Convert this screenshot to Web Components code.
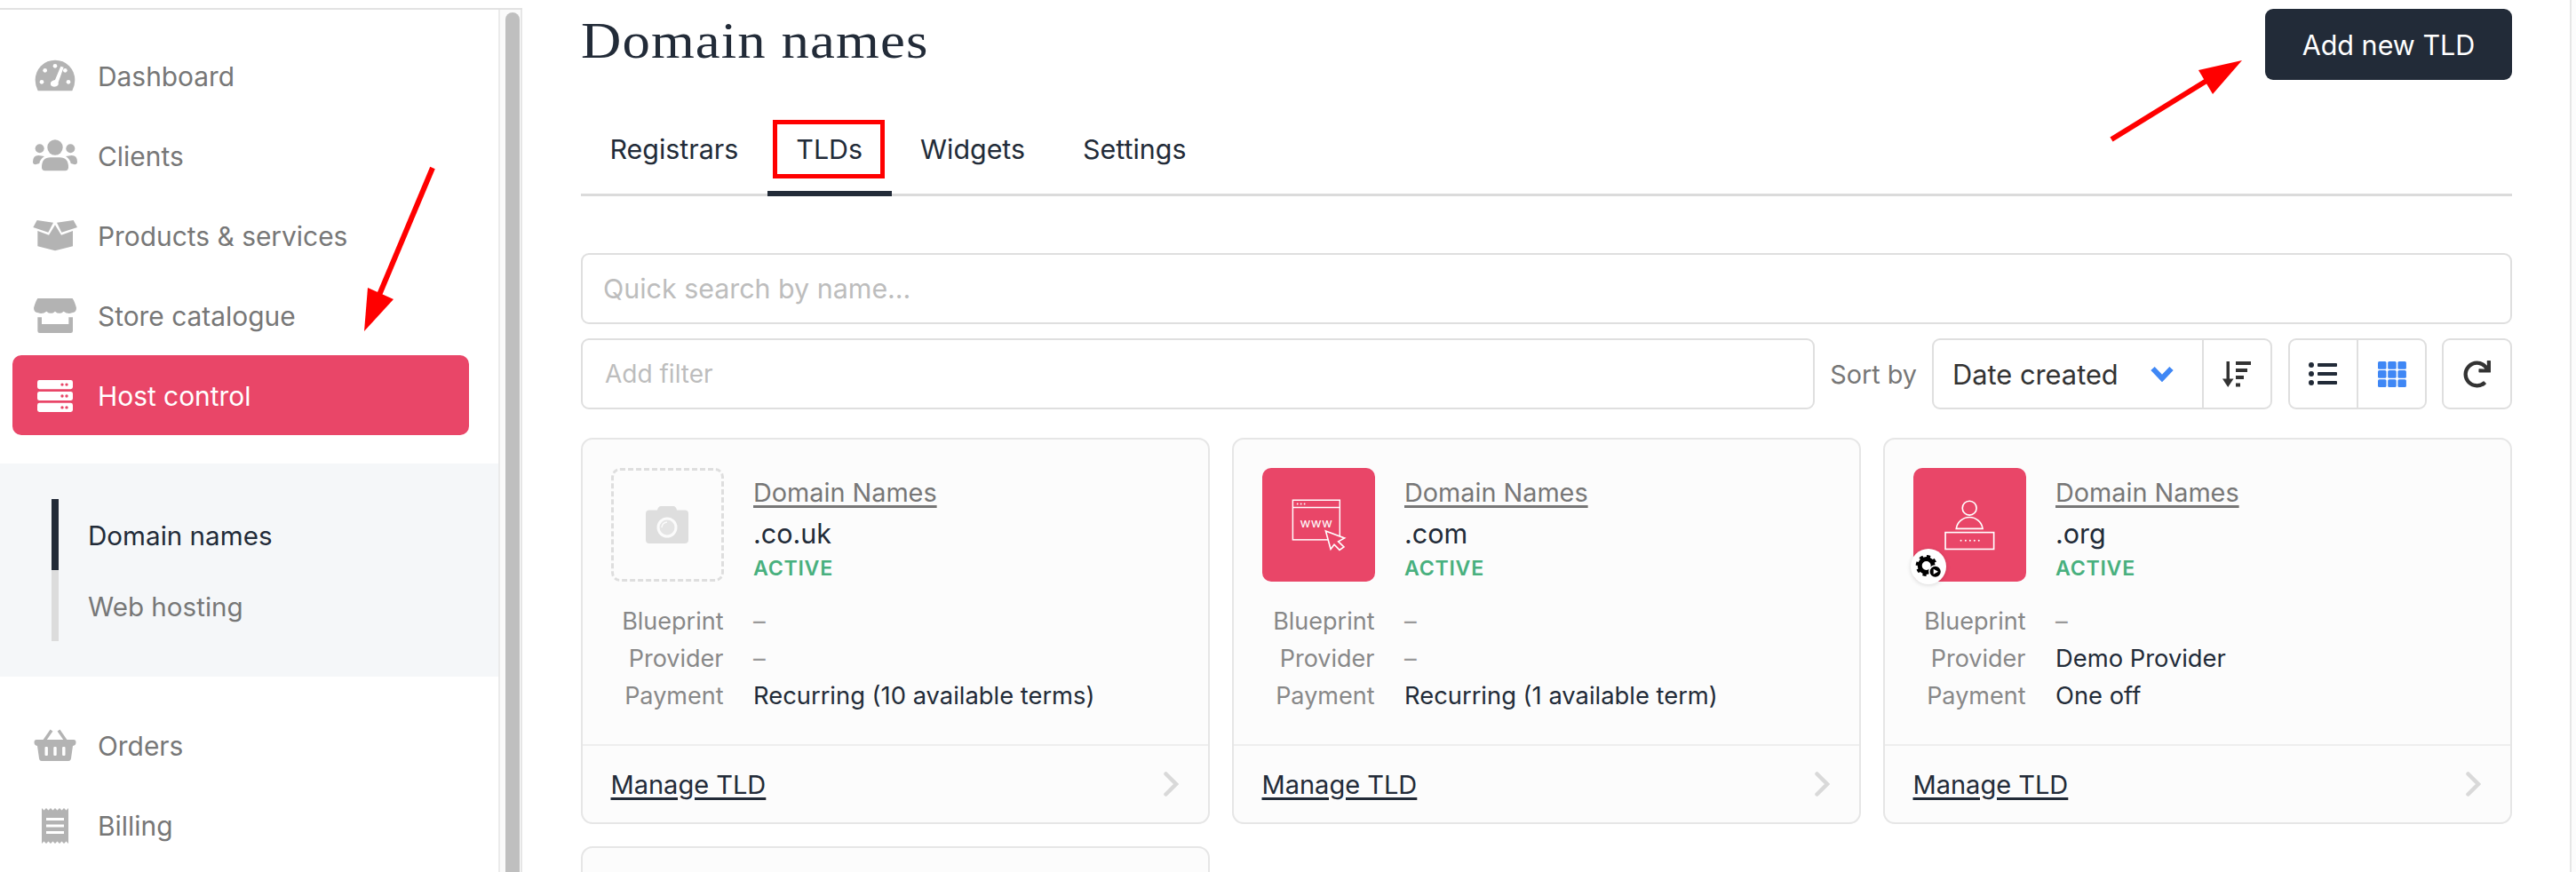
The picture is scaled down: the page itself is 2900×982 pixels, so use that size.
<!DOCTYPE html>
<html lang="en">
<head>
<meta charset="utf-8">
<title>Domain names</title>
<style>
html,body{margin:0;padding:0;background:#fff;overflow:hidden}
body{font-family:Inter,"Liberation Sans",sans-serif;color:#222b38;font-size:29.6px}
</style>
</head>
<body>
<app-shell>
  <side-bar slot="side">
    <nav-item><svg slot="icon" width="50" height="40" viewBox="111 78 150 120"><path fill="#b3b3b3" d="M128 187Q119 170 119 150A67 67 0 0 1 253 150Q253 170 244 187Z"/><g fill="#fff"><circle cx="141" cy="157" r="7"/><circle cx="152" cy="118" r="7"/><circle cx="186" cy="103" r="7"/><circle cx="220" cy="118" r="7"/><circle cx="231" cy="157" r="7"/><path d="M205 104L215 107L197 158Q200 172 183 173Q169 173 171 160Q174 152 186 150Z"/></g></svg>Dashboard</nav-item>
    <nav-item><svg slot="icon" width="50" height="40" viewBox="111 348 150 120"><g fill="#b3b3b3"><circle cx="186" cy="378" r="26"/><circle cx="134" cy="382" r="15"/><circle cx="238" cy="382" r="15"/><path d="M141 445Q141 412 170 412L202 412Q231 412 231 445Q231 457 220 457L152 457Q141 457 141 445Z"/><path d="M111 427Q111 405 130 405L150 408Q135 418 133 432L120 436Q111 436 111 427Z"/><path d="M261 427Q261 405 242 405L222 408Q237 418 239 432L252 436Q261 436 261 427Z"/></g></svg>Clients</nav-item>
    <nav-item><svg slot="icon" width="50" height="40" viewBox="111 618 150 120"><g fill="#b3b3b3"><path d="M125 624L180 632L163 665L112 648Z"/><path d="M248 624L192 632L208 665L261 648Z"/><path d="M127 660L165 674L186 640L207 674L246 660L246 712L186 727L127 712Z"/></g></svg>Products &amp; services</nav-item>
    <nav-item><svg slot="icon" width="50" height="40" viewBox="111 888 150 120"><g fill="#b3b3b3"><path d="M130 885L242 885Q250 892 258 920Q258 935 243 937Q228 942 215 932Q200 945 186 932Q172 945 157 932Q144 942 129 937Q114 935 114 920Q122 892 130 885Z"/><path d="M127 952L141 952L141 975L232 975L232 952L246 952L246 998Q246 1005 239 1005L134 1005Q127 1005 127 998Z"/></g></svg>Store catalogue</nav-item>
    <nav-item active><svg slot="icon" width="40" height="36" viewBox="0 0 40 36"><g fill="#fff"><rect width="40" height="10.2" rx="2.4"/><rect y="12.9" width="40" height="10.2" rx="2.4"/><rect y="25.8" width="40" height="10.2" rx="2.4"/></g><g fill="#e94668"><circle cx="28" cy="5.1" r="1.7"/><circle cx="33" cy="5.1" r="1.7"/><circle cx="28" cy="18" r="1.7"/><circle cx="33" cy="18" r="1.7"/><circle cx="28" cy="30.9" r="1.7"/><circle cx="33" cy="30.9" r="1.7"/></g></svg>Host control</nav-item>
    <sub-nav>
      <sub-item active>Domain names</sub-item>
      <sub-item>Web hosting</sub-item>
    </sub-nav>
    <nav-item><svg slot="icon" width="50" height="40" viewBox="0 0 50 40"><g fill="none" stroke="#b3b3b3" stroke-width="3.4"><path d="M13 14L21 2.5"/><path d="M37 14L29 2.5"/></g><path fill="#b3b3b3" d="M4 13H46Q48.500 13 48.500 16Q48.500 19.500 45 20L43 34Q42.600 37 40 37H10Q7.400 37 7 34L5 20Q1.500 19.500 1.500 16Q1.500 13 4 13Z"/><g fill="#fff"><rect x="13.500" y="21" width="3.400" height="10" rx="1"/><rect x="23.300" y="21" width="3.400" height="10" rx="1"/><rect x="33.100" y="21" width="3.400" height="10" rx="1"/></g></svg>Orders</nav-item>
    <nav-item><svg slot="icon" width="50" height="40" viewBox="0 0 50 40"><path fill="#b3b3b3" d="M10 0L12.500 2.500L15 0L17.500 2.500L20 0L22.500 2.500L25 0L27.500 2.500L30 0L32.500 2.500L35 0L37.500 2.500L40 0V40L37.500 37.500L35 40L32.500 37.500L30 40L27.500 37.500L25 40L22.500 37.500L20 40L17.500 37.500L15 40L12.500 37.500L10 40Z"/><g fill="#fff"><rect x="15" y="11" width="20" height="3"/><rect x="15" y="18.500" width="20" height="3"/><rect x="15" y="26" width="20" height="3"/></g></svg>Billing</nav-item>
  </side-bar>
  <main-view slot="main">
    <page-header>Domain names<app-button slot="action">Add new TLD</app-button></page-header>
    <tab-bar>
      <tab-item>Registrars</tab-item>
      <tab-item active marked>TLDs</tab-item>
      <tab-item>Widgets</tab-item>
      <tab-item>Settings</tab-item>
    </tab-bar>
    <search-box>Quick search by name...</search-box>
    <filter-bar></filter-bar>
    <card-grid>
      <tld-card name=".co.uk" blueprint="–" provider="–" payment="Recurring (10 available terms)" dim-blueprint dim-provider>
        <thumb-box slot="thumb" dashed><svg width="48" height="42" viewBox="0 0 48 42"><path fill="#dedede" d="M17 0H31Q34 0 35 4.500H44Q48 4.500 48 8.500V38Q48 42 44 42H4Q0 42 0 38V8.500Q0 4.500 4 4.500H13Q14 0 17 0Z"/><circle cx="24" cy="24" r="11.500" fill="#fbfbfb"/><circle cx="24" cy="24" r="8.500" fill="#e4e4e4"/><path d="M18 24A6 6 0 0 1 24 18" fill="none" stroke="#fbfbfb" stroke-width="1.500"/></svg></thumb-box>
      </tld-card>
      <tld-card name=".com" blueprint="–" provider="–" payment="Recurring (1 available term)" dim-blueprint dim-provider>
        <thumb-box slot="thumb"><svg width="128" height="128" viewBox="63 50 384 384"><g fill="none" stroke="#fff" stroke-width="4.500"><rect x="167" y="158" width="160" height="135"/><path d="M167 183H327"/></g><g fill="#fff"><circle cx="183" cy="171" r="2.800"/><circle cx="195" cy="171" r="2.800"/><circle cx="207" cy="171" r="2.800"/></g><text x="247" y="250" text-anchor="middle" font-family="Inter,'Liberation Sans',sans-serif" font-size="44" letter-spacing="1" fill="#fff">www</text><path fill="#e94668" stroke="#fff" stroke-width="5" stroke-linejoin="miter" d="M279 263L343 287L322 299L341 317L326 328L308 309L296 325Z"/></svg></thumb-box>
      </tld-card>
      <tld-card name=".org" blueprint="–" provider="Demo Provider" payment="One off" dim-blueprint>
        <thumb-box slot="thumb" badge><svg width="128" height="128" viewBox="70 50 384 384"><g fill="none" stroke="#fff" stroke-width="5"><circle cx="261" cy="185" r="24"/><path d="M216 255A45.500 45.500 0 0 1 306 255Z"/><rect x="179" y="268" width="165" height="57"/></g><g fill="#fff"><circle cx="232" cy="296" r="3"/><circle cx="248" cy="296" r="3"/><circle cx="263" cy="296" r="3"/><circle cx="278" cy="296" r="3"/><circle cx="293" cy="296" r="3"/></g></svg></thumb-box>
      </tld-card>
      <tld-card empty></tld-card>
    </card-grid>
  </main-view>
  <mark-arrows slot="over"></mark-arrows>
</app-shell>

<script>
function define(tag, css, html){
  customElements.define(tag, class extends HTMLElement{
    constructor(){
      super();
      const r=this.attachShadow({mode:'open'});
      r.innerHTML='<style>*,:host{box-sizing:border-box}'+css+'</style>'+(typeof html==='function'?html(this):html);
    }
  });
}

define('app-shell',`
  :host{display:flex;position:relative;width:2900px;height:982px;overflow:hidden;background:#fff}
  .left{display:flex;width:588px;flex:none;margin-top:9px;border-top:2px solid #e2e2e2}
  .rail{flex:none;width:27px;border-left:2px solid #ebebeb;border-right:2px solid #e6e6e6;background:#fafafa;padding:3px 2px 0 6px;overflow:hidden}
  .thumb{background:#bfbfbf;border-radius:8px 8px 0 0;width:16px;height:1200px}
  .edge{flex:none;width:7px;border-left:2px solid #e6e6e6;background:#fcfcfc}
  .over{position:absolute;inset:0;pointer-events:none}
`,`<div class="left"><slot name="side"></slot><div class="rail"><div class="thumb"></div></div></div><slot name="main"></slot><div class="edge"></div><div class="over"><slot name="over"></slot></div>`);

define('side-bar',`
  :host{display:block;width:561px;flex:none;padding-top:30px;overflow:hidden;background:#fff}
`,`<slot></slot>`);

define('nav-item',`
  :host{display:flex;align-items:center;height:90px;margin:0 33px 0 14px;padding-left:23px;border-radius:10px;color:#777;font-size:29.9px;line-height:40px}
  :host([active]){background:#e94668;color:#fff;margin-top:-1px;padding-top:2px}
  .ic{display:flex;width:50px;height:40px;margin-right:23px;align-items:center;justify-content:center;flex:none}
`,`<span class="ic"><slot name="icon"></slot></span><span><slot></slot></span>`);

define('sub-nav',`
  :host{display:block;margin:32px 0 33px;padding:40px 58px;background:#f5f7f9}
`,`<slot></slot>`);

define('sub-item',`
  :host{display:flex;align-items:center;height:80px;padding:2px 0 0 33px;border-left:8px solid #dcdcdc;color:#777;font-size:29.6px}
  :host([active]){border-left-color:#222b38;color:#222b38}
`,`<slot></slot>`);

define('main-view',`
  :host{display:block;flex:1;min-width:0;padding:10px 65px 0 66px;overflow:hidden;background:#fff}
`,`<slot></slot>`);

define('page-header',`
  :host{display:flex;justify-content:space-between;align-items:flex-start;height:80px}
  h1{margin:0;font:400 56px/72px "Liberation Serif",serif;color:#222b38;letter-spacing:1px;transform:scaleX(1.12);transform-origin:left center;white-space:nowrap}
`,`<h1><slot></slot></h1><slot name="action"></slot>`);

define('app-button',`
  :host{display:flex;align-items:center;justify-content:center;width:278px;height:80px;background:#222b38;border-radius:9px;color:#fff;font-size:30.5px}
`,`<slot></slot>`);

define('tab-bar',`
  :host{display:flex;height:131px;padding-top:44px;box-shadow:inset 0 -3px 0 #dbdbdb}
`,`<slot></slot>`);

define('tab-item',`
  :host{display:block;position:relative;height:87px;padding:0 32.5px;border-bottom:6px solid transparent;color:#222b38;font-size:30.4px;line-height:68px}
  :host([active]){border-bottom-color:#222b38}
  .mark{display:none;position:absolute;left:6px;top:1px;width:126px;height:66px;border:5px solid #f00}
  :host([marked]) .mark{display:block}
`,`<slot></slot><span class="mark"></span>`);

define('search-box',`
  :host{display:flex;align-items:center;height:80px;margin-top:64px;padding-left:23px;border:2.500px solid #dfdfdf;border-radius:9px;color:#bdbdbd;font-size:30.4px;background:#fff}
`,`<slot></slot>`);

define('filter-bar',`
  :host{display:flex;align-items:center;height:80px;margin:16px 0 32px;font-size:30.8px}
  .box{display:flex;align-items:stretch;height:80px;border:2.500px solid #dfdfdf;border-radius:9px;background:#fff}
  .input{flex:1;align-items:center;padding-left:25px;color:#bdbdbd;font-size:28px}
  .label{margin:0 17px;color:#777;font-size:28.8px}
  .sel{width:383px}
  .seg{display:flex;align-items:center;justify-content:center}
  .seg+.seg{border-left:2px solid #dfdfdf}
  .date{width:302px;padding-left:21px;justify-content:flex-start;color:#333}
  .date svg{margin-left:auto;margin-right:32px}
  .grp{width:156px;margin-left:18px}
  .grp .seg{flex:1}
  .grp .seg:first-child svg{margin-left:-2px}
  .re{width:79px;margin-left:17px;align-items:center;justify-content:center}
`,`<div class="box input">Add filter</div><span class="label">Sort by</span>
  <div class="box sel"><div class="seg date">Date created<svg width="26" height="18" viewBox="0 0 26 18"><path d="M2.500 3L13 14L23.500 3" fill="none" stroke="#3f87f5" stroke-width="6"/></svg></div>
  <div class="seg" style="flex:1"><svg width="32" height="29" viewBox="0 0 32 29" style="margin-left:-2px"><g fill="#333"><rect x="4.500" y="0" width="3.500" height="22"/><path d="M0 19.500H12.500L6.200 29Z"/><rect x="15" y="0" width="17" height="4"/><rect x="15" y="8" width="13" height="4"/><rect x="15" y="16" width="9" height="4"/><rect x="15" y="24.500" width="5" height="4"/></g></svg></div></div>
  <div class="box grp"><div class="seg"><svg width="32" height="28" viewBox="0 0 32 28"><g fill="#222b38"><circle cx="3" cy="4" r="3"/><circle cx="3" cy="14" r="3"/><circle cx="3" cy="24" r="3"/><rect x="10" y="2" width="22" height="4" rx="1"/><rect x="10" y="12" width="22" height="4" rx="1"/><rect x="10" y="22" width="22" height="4" rx="1"/></g></svg></div>
  <div class="seg"><svg width="32" height="29" viewBox="0 0 32 29"><g fill="#3f87f5"><rect width="9.500" height="8.700" rx="1.500"/><rect x="11.200" width="9.500" height="8.700" rx="1.500"/><rect x="22.400" width="9.500" height="8.700" rx="1.500"/><rect y="10.100" width="9.500" height="8.700" rx="1.500"/><rect x="11.200" y="10.100" width="9.500" height="8.700" rx="1.500"/><rect x="22.400" y="10.100" width="9.500" height="8.700" rx="1.500"/><rect y="20.200" width="9.500" height="8.700" rx="1.500"/><rect x="11.200" y="20.200" width="9.500" height="8.700" rx="1.500"/><rect x="22.400" y="20.200" width="9.500" height="8.700" rx="1.500"/></g></svg></div></div>
  <div class="box re"><svg width="31" height="31" viewBox="0 0 512 512"><path fill="#333" d="M500.33 0h-47.41a12 12 0 0 0-12 12.57l4 82.76A247.42 247.42 0 0 0 256 8C119.34 8 8.9 119.53 8 256.19 7.1 393.07 118.08 504 256 504a247.1 247.1 0 0 0 166.18-63.91 12 12 0 0 0 .48-17.43l-34-34a12 12 0 0 0-16.38-.55A176 176 0 1 1 402.1 157.8l-101.53-4.87a12 12 0 0 0-12.57 12v47.41a12 12 0 0 0 12 12h200.33a12 12 0 0 0 12-12V12a12 12 0 0 0-12-12z"/></svg></div>`);

define('card-grid',`
  :host{display:grid;grid-template-columns:repeat(3,708px);grid-auto-rows:435px;gap:25px}
`,`<slot></slot>`);

define('thumb-box',`
  :host{display:flex;position:relative;align-items:center;justify-content:center;width:127px;height:128px;border-radius:10px;background:#e94668;flex:none}
  :host([dashed]){background:none;border:3px dashed #dedede}
  .b{display:none;position:absolute;left:-3px;top:91px;width:40px;height:40px;border-radius:50%;background:#fff;box-shadow:0 1px 5px rgba(0,0,0,.14)}
  :host([badge]) .b{display:block}
  .b svg{display:block}
`,`<slot></slot><span class="b"><svg width="40" height="40" viewBox="0 0 40 40"><circle cx="17.700" cy="19" r="7.500" fill="none" stroke="#000" stroke-width="5"/><circle cx="17.700" cy="19" r="10.500" fill="none" stroke="#000" stroke-width="3" stroke-dasharray="4.120 4.120"/><circle cx="27.700" cy="25.700" r="6.800" fill="#000" stroke="#fff" stroke-width="1.500"/><path d="M25.700 22.700L31 25.700L25.700 28.700Z" fill="#fff"/></svg></span>`);

define('tld-card',`
  :host{display:flex;flex-direction:column;border:2.500px solid #e6e6e6;border-radius:13px;background:#fcfcfc;overflow:hidden}
  .body{flex:1;padding:31.500px 33px 0 31.500px}
  .top{display:flex;gap:33.500px}
  .info{padding-top:8px;min-width:0}
  .cat{height:40px;line-height:40px;color:#777;font-size:28.8px;text-decoration:underline;text-decoration-thickness:2.500px;text-underline-offset:4px}
  .tld{height:40px;margin-top:6px;line-height:40px;color:#222b38;font-size:30.5px}
  .st{height:24px;margin-top:7px;line-height:24px;color:#48b07e;font-size:23.200px;font-weight:600;letter-spacing:.7px}
  dl{display:grid;grid-template-columns:127px 1fr;column-gap:33.500px;grid-auto-rows:42px;margin:24.500px 0 0;line-height:42px;font-size:27.35px}
  dt{text-align:right;color:#888;font-size:27px}
  dd{margin:0;color:#222b38}
  dd.dim{color:#999}
  .foot{display:flex;align-items:center;justify-content:space-between;height:88px;padding:0 33px 0 31.500px;border-top:2px solid #eeeeee;font-size:29px;flex:none}
  .foot a{color:#222b38;text-decoration:underline;text-decoration-thickness:2.500px;text-underline-offset:4px}
`,(el)=>{
  if(el.hasAttribute('empty')) return '';
  const a=n=>el.getAttribute(n)||'';
  return `<div class="body"><div class="top"><slot name="thumb"></slot><div class="info"><div class="cat">Domain Names</div><div class="tld">${a('name')}</div><div class="st">ACTIVE</div></div></div>
  <dl><dt>Blueprint</dt><dd class="${el.hasAttribute('dim-blueprint')?'dim':''}">${a('blueprint')}</dd><dt>Provider</dt><dd class="${el.hasAttribute('dim-provider')?'dim':''}">${a('provider')}</dd><dt>Payment</dt><dd>${a('payment')}</dd></dl></div>
  <div class="foot"><a>Manage TLD</a><svg width="17" height="28" viewBox="0 0 17 28"><path d="M2.500 2.500L14 14L2.500 25.500" fill="none" stroke="#d9d9d9" stroke-width="4.500" stroke-linecap="round"/></svg></div>`;
});

define('mark-arrows',`
  :host{display:block;width:100%;height:100%}
  svg{display:block}
`,`<svg width="2900" height="982" viewBox="0 0 2900 982"><g fill="#f00" stroke="#f00"><path d="M487 189L427 332" fill="none" stroke-width="6"/><path stroke="none" d="M414 324L443 337L410 373Z"/><path d="M2377 157L2484 91" fill="none" stroke-width="6"/><path stroke="none" d="M2475 79L2491 106L2524 68Z"/></g></svg>`);
</script>
</body>
</html>
